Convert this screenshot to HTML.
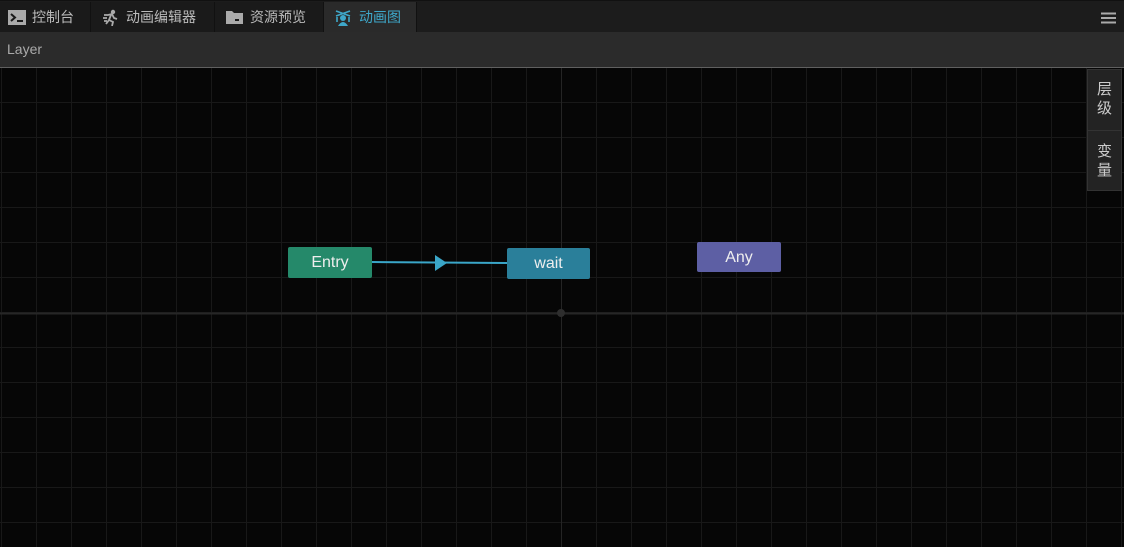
<!DOCTYPE html>
<html><head><meta charset="utf-8"><style>
*{margin:0;padding:0;box-sizing:border-box}
body{width:1124px;height:547px;overflow:hidden;background:#060606;font-family:"Liberation Sans","Noto Sans CJK SC",sans-serif;position:relative}
#tabs{position:absolute;left:0;top:0;width:1124px;height:32px;background:#1c1c1c;border-top:1px solid #111}
.tab{position:absolute;top:1px;height:31px;color:#bbb;font-size:14px;line-height:30px;border-right:1px solid #111;background:#1a1a1a}
.tab.active{background:#2a2a2a;color:#3ea7c9}
.tab svg{position:absolute;top:8px}
#layer{position:absolute;left:0;top:32px;width:1124px;height:36px;background:#2b2b2b;border-bottom:1px solid #606060;color:#aaa;font-size:14px;line-height:34px;padding-left:7px}
#grid{position:absolute;left:0;top:68px;width:1124px;height:479px;
background-image:linear-gradient(90deg,#181818 1px,transparent 1px),linear-gradient(0deg,#181818 1px,transparent 1px);
background-size:35px 35px;background-position:1px 35px,0 35px}
.node{position:absolute;height:31px;border-radius:2px;color:#eee;font-size:16px;text-align:center;line-height:32px}
#side{position:absolute;left:1087px;top:69px;width:35px;height:122px;background:#232323;border:1px solid #333;color:#ccc;font-size:15px;text-align:center}
</style></head><body>
<div id="tabs">
 <div class="tab" style="left:0;width:91px"><svg style="left:8px" width="18" height="15" viewBox="0 0 18 15"><rect width="18" height="15" fill="#aaa"/><path d="M3 4l4 3.5-4 3.5" stroke="#1a1a1a" stroke-width="2" fill="none"/><rect x="9" y="10" width="6" height="2" fill="#1a1a1a"/></svg><span style="position:absolute;left:32px">控制台</span></div>
 <div class="tab" style="left:91px;width:124px"><svg style="left:11px;top:7px" width="16" height="17" viewBox="0 0 16 17"><circle cx="11" cy="3" r="2.2" fill="#aaa"/><path d="M2 6h4l4-1 2 4 3 1M9 6l-2 5 4 2-1 4M7 11l-3 4M1 9h4M2 12h3" stroke="#aaa" stroke-width="1.8" fill="none"/></svg><span style="position:absolute;left:35px">动画编辑器</span></div>
 <div class="tab" style="left:215px;width:109px"><svg style="left:11px" width="17" height="14" viewBox="0 0 17 14"><path d="M0 1h6l2 2h9v11H0z" fill="#aaa"/><rect x="9" y="9" width="4" height="2" fill="#1a1a1a"/></svg><span style="position:absolute;left:35px">资源预览</span></div>
 <div class="tab active" style="left:324px;width:93px"><svg style="left:10px;top:7px" width="18" height="17" viewBox="0 0 18 17"><path d="M2 2l14 5M16 2L2 7M3 8v5M15 8v5" stroke="#3ea7c9" stroke-width="1.6" fill="none"/><circle cx="9" cy="9" r="3" fill="#3ea7c9"/><path d="M4 17q5-8 10 0z" fill="#3ea7c9"/></svg><span style="position:absolute;left:35px">动画图</span></div>
 <svg style="position:absolute;left:1101px;top:11px" width="15" height="12" viewBox="0 0 15 12"><path d="M0 1.5h15M0 6h15M0 10.5h15" stroke="#aaa" stroke-width="2"/></svg>
</div>
<div id="layer">Layer</div>
<div id="grid"></div>
<svg style="position:absolute;left:0;top:68px" width="1124" height="479">
 <line x1="561.5" y1="0" x2="561.5" y2="479" stroke="#242424" stroke-width="1"/>
 <line x1="0" y1="245.5" x2="1124" y2="245.5" stroke="#262626" stroke-width="2"/>
 <circle cx="561" cy="245" r="4" fill="#2e2e2e"/>
 <line x1="371" y1="194" x2="507" y2="195" stroke="#3aa6c8" stroke-width="2"/>
 <path d="M435 187L447 195 435 203z" fill="#3aa6c8"/>
</svg>
<div class="node" style="left:288px;top:247px;width:84px;background:#25896a">Entry</div>
<div class="node" style="left:507px;top:248px;width:83px;background:#2a7f9a">wait</div>
<div class="node" style="left:697px;top:242px;width:84px;height:30px;line-height:31px;background:#5d5fa4">Any</div>
<div id="side"><div style="padding-top:10px;line-height:19px;height:61px;border-bottom:1px solid #333">层<br>级</div><div style="padding-top:11px;line-height:19px">变<br>量</div></div>
</body></html>
